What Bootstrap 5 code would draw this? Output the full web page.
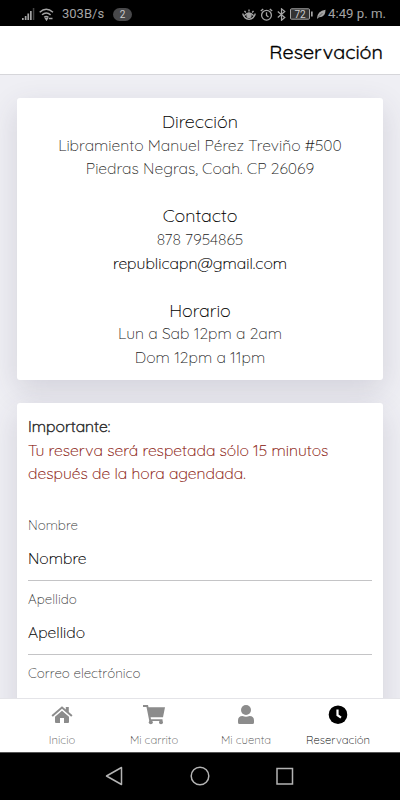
<!DOCTYPE html>
<html lang="es">
<head>
<meta charset="utf-8">
<meta name="viewport" content="width=device-width, initial-scale=1">
<title>Reservación</title>
<link href="https://cdn.jsdelivr.net/npm/bootstrap@5.3.0/dist/css/bootstrap.min.css" rel="stylesheet">
<style>
body{font-family:Quicksand,Lato,"Open Sans",sans-serif;font-weight:300;height:800px;overflow:hidden;background:#efeff4;color:#000}
.status-bar{height:26px;background:#000;color:#a4a4a4;font:12.5px/26px Roboto,sans-serif;padding:2px 14px 0 22px}
.status-bar svg{display:block;flex:none}
.net-speed{font-size:13px;margin-left:8px}
.clock{font-size:13.2px;margin-left:2px}
.status-pill{width:19px;height:13px;border-radius:7px;background:#48484a;color:#ccc;font-size:10px;line-height:13px;margin-left:9px}
.app-title{height:49px;border-bottom:1.5px solid #d6d6da;font-size:19.8px;font-weight:400;padding:3px 17px 0;-webkit-text-stroke:.3px #000}
.page-body{padding:23px 17px 0;min-height:0}
.panel{border:0;border-radius:3px;box-shadow:0 10px 30px rgba(60,55,85,.16);padding:12px 11px;line-height:23.6px;font-size:15.73px;color:#222}
.panel-info{height:282px}
.panel-form{margin-top:23px;height:320px}
.t-head{font-size:17.9px;color:#000;-webkit-text-stroke:.1px #000}
.t-strong{color:#333;-webkit-text-stroke:.5px #333}
.t-alert{color:#8c1d14;-webkit-text-stroke:.15px #8c1d14}
.t-dark{color:#000;-webkit-text-stroke:.15px #000}
.field-label{font-size:13.4px;line-height:20px;padding-top:1px;color:#333}
.field-box{font-size:15.7px;line-height:22px;color:#000;height:46px;padding-top:12px;border-bottom:1.5px solid #c4c4c6;-webkit-text-stroke:.15px #000}
.field-row{height:74px}
.tab-bar{height:54px;background:#fff;border-top:1px solid #e4e4e8;padding:0 16px}
.tab-item{width:92px;color:#555;font-size:11.3px;line-height:14px;padding-top:6px}
.tab-item svg{display:block;margin:0 auto 8px;fill:#8c8c8c}
.tab-item.active{color:#000}
.tab-item.active svg{fill:#000}
.sys-nav{height:48px;background:#000;border-top:1px solid #555;padding:0 2px 1px 0}
</style>
</head>
<body class="d-flex flex-column">
<div class="status-bar d-flex align-items-center flex-shrink-0">
<svg width="13" height="12" fill="#a4a4a4"><path d="M0 10h1.7v2H0zM2.800 8h1.700v4H2.800zM5.400 5.500h1.700v6.500H5.400zM8 3h1.700v9H8z"/><path d="M10.800 0h1.500v12h-1.500z" fill="#444"/></svg>
<svg class="ms-1" width="15" height="13" fill="none" stroke="#a4a4a4" stroke-width="1.500"><path d="M.7 4.200Q7.200-1.700 14 4.200M3 6.800q4.200-3.600 8.600 0M5.200 9.300q2-1.700 4.200 0"/><path d="M6.500 10.500h2l-1 1.500zM10 10.500h3.500" fill="#a4a4a4" stroke-width="1.300"/></svg>
<span class="net-speed">303B/s</span><span class="status-pill text-center">2</span>
<svg class="ms-auto" width="14" height="13" fill="none" stroke="#a4a4a4" stroke-width="1.300"><path d="M.7 5.500Q2 11 7 11.300 12 11 13.300 5.500M2.500 7.500Q7 2.500 11.500 7.500M7 3.500V1.500M3.800 4.500L2.500 2.800M10.200 4.500l1.300-1.700"/><circle cx="7" cy="7.500" r="2" fill="#a4a4a4"/></svg>
<svg class="ms-1" width="13" height="13" fill="none" stroke="#a4a4a4" stroke-width="1.300"><circle cx="6.500" cy="7.200" r="4.900"/><path d="M6.500 4.200v3.300l2 1.500M.8 3L3.200.9M12.200 3L9.800.9"/></svg>
<svg class="ms-1" width="9" height="13" fill="none" stroke="#a4a4a4" stroke-width="1.200"><path d="M.8 3.500l7 6-3.300 2.800V.8l3.300 2.700-7 6"/></svg>
<svg class="ms-1" width="23" height="12"><rect x=".5" y=".8" width="19" height="10.400" rx="1" fill="#333" stroke="#a4a4a4"/><path d="M21 3.500h1.700v5H21z" fill="#a4a4a4"/><text x="10" y="9.700" text-anchor="middle" font-family="Roboto" font-size="10" fill="#ccc">72</text></svg>
<svg class="ms-1" width="9" height="10" viewBox="0 0 10 10" fill="#a4a4a4"><path d="M0 10Q.3 1.500 9.500.3 9.500 9 2 8.700L.9 10z"/><path d="M2 8L6 4" stroke="#000" stroke-width=".5"/></svg>
<span class="clock">4:49 p. m.</span>
</div>
<header class="app-title bg-white d-flex flex-shrink-0 align-items-center justify-content-end">Reservación</header>
<main class="page-body flex-grow-1 overflow-hidden">
<section class="card panel panel-info text-center">
<div class="t-head">Dirección</div>
<div>Libramiento Manuel Pérez Treviño #500</div>
<div>Piedras Negras, Coah. CP 26069</div><br>
<div class="t-head">Contacto</div>
<div>878 7954865</div>
<div class="t-dark">republicapn@gmail.com</div><br>
<div class="t-head">Horario</div>
<div>Lun a Sab 12pm a 2am</div>
<div>Dom 12pm a 11pm</div>
</section>
<section class="card panel panel-form">
<div class="t-strong">Importante:</div>
<div class="t-alert">Tu reserva será respetada sólo 15 minutos<br>después de la hora agendada.</div>
<div class="field-row flex-shrink-0 mt-4 pt-1"><div class="field-label">Nombre</div><div class="field-box">Nombre</div></div>
<div class="field-row flex-shrink-0 pt-1"><div class="field-label">Apellido</div><div class="field-box">Apellido</div></div>
<div class="field-row flex-shrink-0 pt-1"><div class="field-label">Correo electrónico</div></div>
</section>
</main>
<nav class="tab-bar d-flex flex-shrink-0">
<div class="tab-item text-center"><svg width="22" height="20" viewBox="0 0 22 20"><path d="M11 5.800l7 6V17a1 1 0 0 1-1 1h-4v-5H9v5H5a1 1 0 0 1-1-1v-5.200z"/><path d="M.5 10.200L11 1.200l3.800 3.300V2h3v5l3.700 3.200-1.300 1.500L11 3.800l-9.200 7.900z"/></svg>Inicio</div>
<div class="tab-item text-center"><svg width="22" height="20" viewBox="0 0 22 20"><path d="M0 0h5l.5 2.200H22l-2 10H7.600l.4 2h11.500v1.800H6.300L3.500 2H0z"/><circle cx="7.800" cy="17.300" r="2"/><circle cx="18" cy="17.300" r="2"/></svg>Mi carrito</div>
<div class="tab-item text-center"><svg width="18" height="20" viewBox="0 0 18 20"><circle cx="9" cy="5" r="5"/><path d="M1 17.500v-2Q1 11 5.500 11q3.500 1.400 7 0Q17 11 17 15.500v2q0 1.500-1.500 1.500h-13Q1 19 1 17.500z"/></svg>Mi cuenta</div>
<div class="tab-item active text-center"><svg width="20" height="20" viewBox="0 0 20 20"><circle cx="10" cy="9.700" r="9.300"/><path d="M9.500 4.500v5.700l3.500 2.500" fill="none" stroke="#fff" stroke-width="2.200"/></svg>Reservación</div>
</nav>
<div class="sys-nav flex-shrink-0 d-flex justify-content-center align-items-center">
<svg width="190" height="22" viewBox="0 0 190 22" fill="none" stroke="#b4b4b4" stroke-width="1.500"><path d="M17.500 2.500v17L2.500 11z" stroke-linejoin="round"/><circle cx="96" cy="11" r="8.800"/><rect x="173" y="3.500" width="15.500" height="15.500"/></svg>
</div>
</body>
</html>
